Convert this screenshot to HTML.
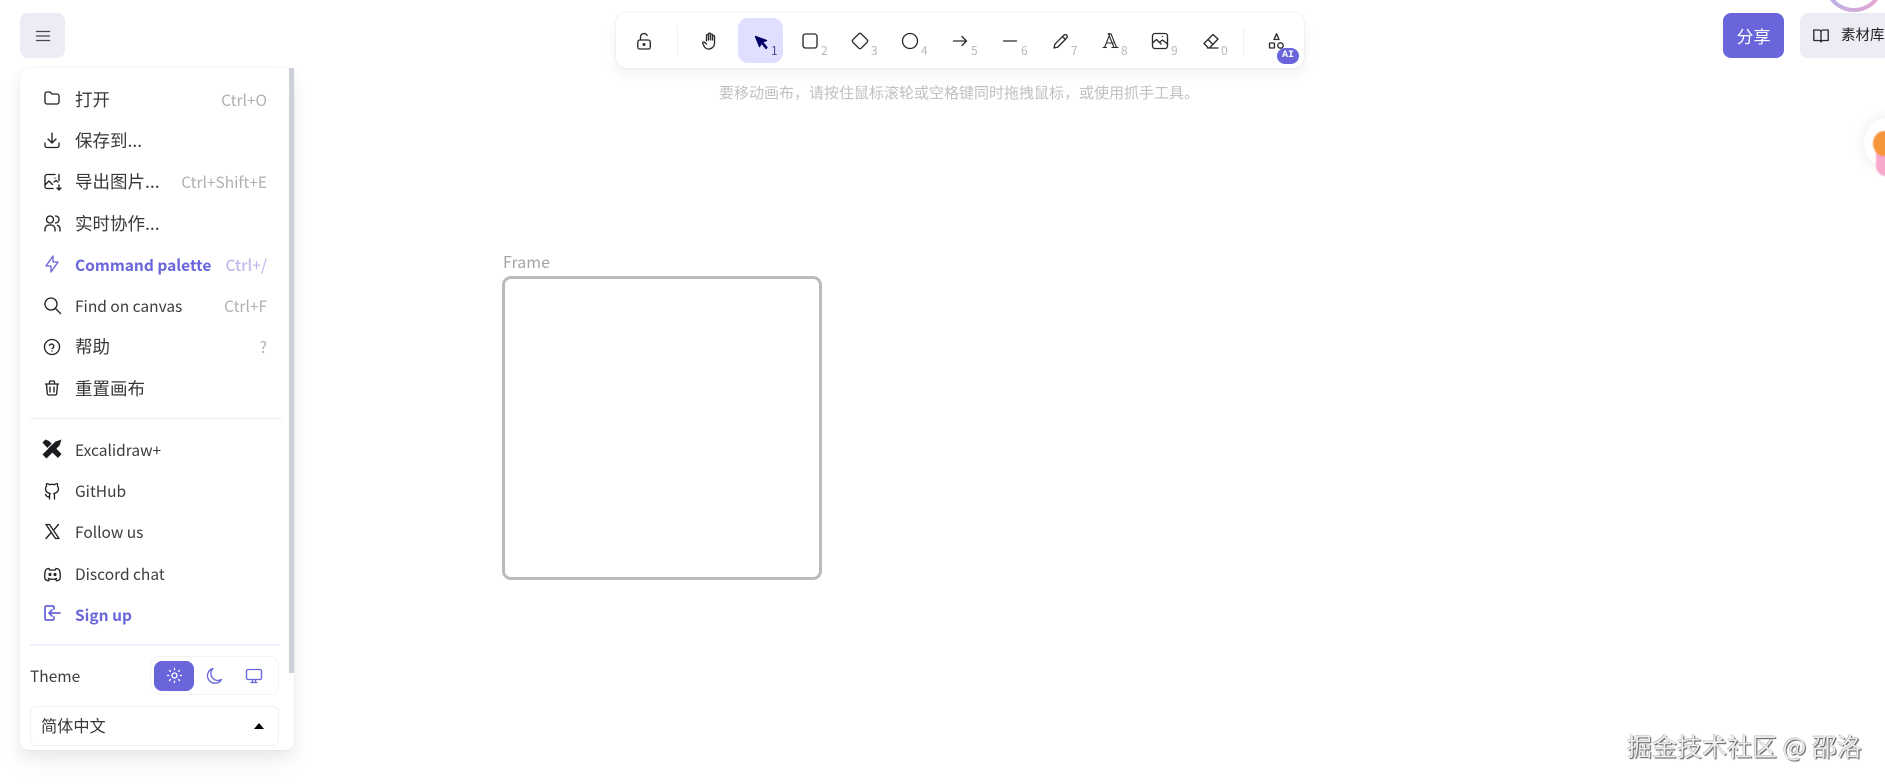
<!DOCTYPE html>
<html lang="zh">
<head>
<meta charset="utf-8">
<style>
html,body{margin:0;padding:0;width:1885px;height:784px;overflow:hidden;background:#fff;}
body{position:relative;font-family:"Noto Sans CJK SC","Liberation Sans",sans-serif;color:#1b1b1f;}
.a{position:absolute;}
svg{position:absolute;fill:none;stroke:currentColor;stroke-width:1.35;stroke-linecap:round;stroke-linejoin:round;overflow:visible;}
.t{position:absolute;left:75px;font-size:15.5px;line-height:24px;height:24px;white-space:nowrap;color:#3d3d42;}
.zh{font-size:17.5px;color:#38383c;}
.k{position:absolute;left:127px;width:140px;text-align:right;font-size:15.5px;line-height:24px;height:24px;color:#b0b0b0;white-space:nowrap;}
.n{position:absolute;font-size:12px;line-height:14px;color:#b8b8b8;}
</style>
</head>
<body>
<!-- hamburger -->
<div class="a" style="left:20px;top:13px;width:45px;height:45px;border-radius:8px;background:#ececf4;"></div>
<svg style="left:36px;top:29px;color:#45454c" width="14" height="14" viewBox="0 0 14 14"><path d="M0.500 2.500h13M0.500 7h13M0.500 11.500h13"/></svg>

<!-- menu panel -->
<div class="a" style="left:20px;top:68px;width:274px;height:682px;background:#fff;border-radius:8px;box-shadow:0 0 1px rgba(0,0,0,.17),0 7px 14px rgba(0,0,0,.06),0 14px 28px rgba(0,0,0,.04);"></div>
<div class="a" style="left:289px;top:68px;width:5px;height:605px;background:#cdd1d8;"></div>

<!-- rows -->
<svg style="left:44px;top:90px;color:#222" width="16" height="16" viewBox="0 0 16 16"><path d="M3 2h3l2 2h5a2 2 0 0 1 2 2v6a2 2 0 0 1-2 2H3a2 2 0 0 1-2-2V4a2 2 0 0 1 2-2z"/></svg>
<div class="t zh" style="top:88px">打开</div><div class="k" style="top:88px">Ctrl+O</div>

<svg style="left:44px;top:132px;color:#222" width="16" height="17" viewBox="0 0 16 17"><path d="M1 11v2.500A2 2 0 0 0 3 15.500h10a2 2 0 0 0 2-2V11M4 7l4 4 4-4M8 1v10"/></svg>
<div class="t zh" style="top:129px">保存到...</div>

<svg style="left:44px;top:173px;color:#222" width="18" height="18" viewBox="0 0 18 18"><path d="M11 1.500H3a2 2 0 0 0-2 2v10a2 2 0 0 0 2 2h6M1 12l4-4 3.500 3.500M10 9l2-1.500 2 1.500M15 1.500v6M15 12v5M13 15l2 2 2-2M11 5h.01"/></svg>
<div class="t zh" style="top:170px">导出图片...</div><div class="k" style="top:170px">Ctrl+Shift+E</div>

<svg style="left:44px;top:215px;color:#222" width="17" height="17" viewBox="0 0 17 17"><circle cx="6" cy="4.500" r="3.500"/><path d="M1 16v-2a4 4 0 0 1 4-4h2a4 4 0 0 1 4 4v2M11.500 1a3.500 3.500 0 0 1 0 7M16 16v-2a4 4 0 0 0-2.500-3.700"/></svg>
<div class="t zh" style="top:212px">实时协作...</div>

<svg style="left:45px;top:255px;color:#6965db" width="14" height="18" viewBox="0 0 14 18"><path d="M8 1v6h5L6 17v-6H1z"/></svg>
<div class="t" style="top:253px;color:#6965db;font-weight:700">Command palette</div><div class="k" style="top:253px;color:#bdbbee;font-weight:500">Ctrl+/</div>

<svg style="left:44px;top:297px;color:#222" width="17" height="17" viewBox="0 0 17 17"><circle cx="7" cy="7" r="6"/><path d="M11.500 11.500l5 5"/></svg>
<div class="t" style="top:294px">Find on canvas</div><div class="k" style="top:294px">Ctrl+F</div>

<svg style="left:44px;top:339px;color:#222" width="16" height="16" viewBox="0 0 16 16"><circle cx="8" cy="8" r="7.500"/><path d="M8 12v.01M8 9.600a2.300 2.300 0 1 0-2.600-3.300"/></svg>
<div class="t zh" style="top:335px">帮助</div><div class="k" style="top:335px">?</div>

<svg style="left:45px;top:380px;color:#222" width="14" height="16" viewBox="0 0 14 16"><path d="M0.500 4h13M5 7v5M9 7v5M1.500 4l.8 9.500a1.500 1.500 0 0 0 1.500 1.500h6.400a1.500 1.500 0 0 0 1.500-1.500l.8-9.500M4.500 4V2a1 1 0 0 1 1-1h3a1 1 0 0 1 1 1v2"/></svg>
<div class="t zh" style="top:377px">重置画布</div>

<div class="a" style="left:30px;top:418px;width:252px;height:1px;background:#ececf2;"></div>

<svg style="left:42px;top:439px;stroke:none;fill:#1b1b1f" width="20" height="20" viewBox="0 0 20 20"><path d="M0.500 3.500L3.500 0.500 7 2 19.500 15l-3.500 4L3.500 7z"/><path d="M0.500 15.500L13.500 2.500 19.500 0.500 17.500 6.500 4.500 19.500z"/><path d="M6 9L10 5" stroke="#fff" stroke-width="1"/></svg>
<div class="t" style="top:438px">Excalidraw+</div>

<svg style="left:44px;top:482px;color:#222" width="16" height="18" viewBox="0 0 16 18"><path d="M5.500 17v-3.500c0-1 .2-1.600.7-2C3.500 11 1.500 9.800 1.500 6.800c0-1 .3-1.800 1-2.500-.2-.8-.1-1.700.2-2.800 1 0 1.900.4 2.800 1.200a8 8 0 0 1 5 0c.9-.8 1.800-1.200 2.800-1.200.3 1.100.4 2 .2 2.800.7.700 1 1.500 1 2.500 0 3-2 4.200-4.700 4.700.5.500.7 1.100.7 2V17M5.500 14.500c-2.200.6-3-.2-4-2"/></svg>
<div class="t" style="top:479px">GitHub</div>

<svg style="left:45px;top:524px;color:#222" width="15" height="15" viewBox="0 0 15 15" stroke-width="1.100"><path d="M1 0.500h3.500L14 14.500h-3.500zM13.500 0.500L8.500 6.300M6.300 8.500L1 14.500"/></svg>
<div class="t" style="top:520px">Follow us</div>

<svg style="left:44px;top:567px;color:#222" width="17" height="15" viewBox="0 0 17 15"><path d="M5 1.500C3.500 1.500 2 2.200 1.500 3.500.7 6 .5 9 1 12c.8 1 2.300 1.700 3.500 1.800l1-2M12 1.500c1.500 0 3 .7 3.500 2 .8 2.500 1 5.500.5 8.500-.8 1-2.300 1.700-3.500 1.800l-1-2M5 1.500l.6 1.500h5.800l.6-1.500M4.500 11.500c2.500 1 5.500 1 8 0"/><circle cx="6" cy="7.500" r=".9"/><circle cx="11" cy="7.500" r=".9"/></svg>
<div class="t" style="top:562px">Discord chat</div>

<svg style="left:44px;top:605px;color:#6965db;stroke-width:1.8" width="17" height="16" viewBox="0 0 17 16"><path d="M10 4V2.500A1.500 1.500 0 0 0 8.500 1h-6A1.500 1.500 0 0 0 1 2.500v11A1.500 1.500 0 0 0 2.500 15h6a1.500 1.500 0 0 0 1.500-1.500V12M16 8H5M8 5L5 8l3 3"/></svg>
<div class="t" style="top:603px;color:#6965db;font-weight:700">Sign up</div>

<div class="a" style="left:30px;top:644px;width:250px;height:2px;background:#f1f0ff;"></div>

<div class="t" style="left:30px;top:664px">Theme</div>
<div class="a" style="left:150px;top:656px;width:127px;height:37px;border:1px solid #f3f3f6;border-radius:10px;"></div>
<div class="a" style="left:154px;top:661px;width:40px;height:30px;background:#6965db;border-radius:8px;"></div>
<svg style="left:167px;top:668px;color:#fff" width="15" height="15" viewBox="0 0 15 15"><circle cx="7.500" cy="7.500" r="2.500"/><path d="M7.500 0.500v1.200M7.500 13.300v1.200M0.500 7.500h1.200M13.300 7.500h1.200M2.500 2.500l.9.900M11.600 11.600l.9.900M2.500 12.500l.9-.9M11.600 3.400l.9-.9"/></svg>
<svg style="left:206px;top:668px;color:#6965db" width="16" height="16" viewBox="0 0 16 16"><path d="M7 0.500a7.500 7.500 0 1 0 8.500 11 7 7 0 0 1-8.500-11z"/></svg>
<svg style="left:246px;top:669px;color:#6965db" width="16" height="14" viewBox="0 0 16 14"><rect x="0.500" y="0.500" width="15" height="10" rx="1.500"/><path d="M5 13.500h6M6.500 10.500v3M9.500 10.500v3"/></svg>

<div class="a" style="left:30px;top:706px;width:247px;height:38px;border:1px solid #f1f1f4;border-radius:6px;"></div>
<div class="t zh" style="left:41px;top:713px;font-size:16.2px">简体中文</div>
<div class="a" style="left:254px;top:723px;width:0;height:0;border-left:5.500px solid transparent;border-right:5.500px solid transparent;border-bottom:6px solid #000;"></div>

<!-- toolbar -->
<div class="a" style="left:616px;top:13px;width:688px;height:55px;background:#fff;border-radius:10px;box-shadow:0 0 1px rgba(0,0,0,.17),0 7px 14px rgba(0,0,0,.05),0 0 4px rgba(0,0,0,.03);"></div>
<svg style="left:637px;top:33px;color:#2a2a2e" width="14" height="17" viewBox="0 0 14 17"><rect x="0.800" y="7" width="12.500" height="9" rx="2"/><path d="M3.500 7V4a3.500 3.500 0 0 1 6.600-1.500"/><circle cx="7" cy="11.500" r=".8" fill="currentColor"/></svg>
<div class="a" style="left:677px;top:26px;width:1px;height:30px;background:#f0f0f6;"></div>
<svg style="left:702px;top:32px;color:#2a2a2e" width="16" height="18" viewBox="0 0 16 18"><path d="M4.500 9V3.500a1 1 0 0 1 2 0M6.500 8V2a1 1 0 0 1 2 0v6M8.500 3a1 1 0 0 1 2 0v5M10.500 4.500a1 1 0 0 1 2 0V11a6 6 0 0 1-6 6c-2 0-3-.8-4-2L.8 11.500c-.6-1 .8-2 1.700-1.200L4.500 12"/></svg>

<div class="a" style="left:738px;top:18px;width:45px;height:45px;background:#e0dfff;border-radius:10px;"></div>
<svg style="left:755px;top:36px;color:#030064;stroke:#030064;fill:#030064" width="14" height="14" viewBox="0 0 14 14"><path d="M0.500 0.500l11 4-4 1.500 4.500 5.500-1 1-4.500-5.500-2 3.500z"/></svg>
<div class="n" style="left:771px;top:44px;color:#4a4790">1</div>

<svg style="left:803px;top:34px;color:#2a2a2e" width="14" height="14" viewBox="0 0 14 14"><rect x="0" y="0" width="14" height="14" rx="2.500"/></svg>
<div class="n" style="left:821px;top:44px">2</div>
<svg style="left:852px;top:33px;color:#2a2a2e" width="16" height="16" viewBox="0 0 16 16"><path d="M6.800 0.800a1.700 1.700 0 0 1 2.400 0l6 6a1.700 1.700 0 0 1 0 2.400l-6 6a1.700 1.700 0 0 1-2.400 0l-6-6a1.700 1.700 0 0 1 0-2.400z"/></svg>
<div class="n" style="left:871px;top:44px">3</div>
<svg style="left:902px;top:33px;color:#2a2a2e" width="16" height="16" viewBox="0 0 16 16"><circle cx="8" cy="8" r="7.500"/></svg>
<div class="n" style="left:921px;top:44px">4</div>
<svg style="left:953px;top:35px;color:#2a2a2e" width="14" height="12" viewBox="0 0 14 12"><path d="M0.500 6h13M9 1.500L13.500 6 9 10.500"/></svg>
<div class="n" style="left:971px;top:44px">5</div>
<svg style="left:1003px;top:40px;color:#2a2a2e" width="14" height="2" viewBox="0 0 14 2" stroke-width="2"><path d="M0.500 1h13"/></svg>
<div class="n" style="left:1021px;top:44px">6</div>
<svg style="left:1053px;top:34px;color:#2a2a2e" width="15" height="15" viewBox="0 0 15 15"><path d="M1 14l.9-3.800L10.800 1.200a2 2 0 0 1 2.900 2.800L4.800 13.100zM9.500 2.600l2.900 2.900"/></svg>
<div class="n" style="left:1071px;top:44px">7</div>
<svg style="left:1103px;top:33px;color:#2a2a2e;stroke-width:1.100" width="15" height="15" viewBox="0 0 15 15"><path d="M1.500 14.500L7 0.800M5 0.800h3l5.500 13.700M5.500 0.800L11 14.500M3.500 10h7M0 14.500h3.500M9 14.500h6"/></svg>
<div class="n" style="left:1121px;top:44px">8</div>
<svg style="left:1152px;top:33px;color:#2a2a2e" width="16" height="16" viewBox="0 0 16 16"><rect x="0.500" y="0.500" width="15" height="15" rx="2.500"/><path d="M0.500 10l4-3.500 4.500 4.500M8 9l2.500-2 5 4M10.500 3.500h.01"/></svg>
<div class="n" style="left:1171px;top:44px">9</div>
<svg style="left:1203px;top:33px;color:#2a2a2e" width="16" height="16" viewBox="0 0 16 16"><path d="M4.500 15H15M5.500 15L1 10.500 10 1.500 15 6l-8.500 9M5 6.500l5 5"/></svg>
<div class="n" style="left:1221px;top:44px">0</div>
<div class="a" style="left:1243px;top:28px;width:1px;height:28px;background:#f0f0f6;"></div>
<svg style="left:1269px;top:33px;color:#2a2a2e" width="15" height="16" viewBox="0 0 15 16"><path d="M7.500 0.800L10 6.500H5z"/><rect x="0.500" y="10" width="5" height="5" rx=".8"/><circle cx="11.500" cy="12.500" r="2.700"/></svg>
<div class="a" style="left:1277px;top:48px;width:22px;height:16px;background:#6965db;border-radius:8px;color:#fff;font-family:'Liberation Mono',monospace;font-weight:700;font-size:10px;line-height:16px;text-align:center;">AI</div>

<!-- hint -->
<div class="a" style="left:559px;top:82px;width:800px;text-align:center;font-size:15px;line-height:22px;color:#c0c0c0;white-space:nowrap;">要移动画布，请按住鼠标滚轮或空格键同时拖拽鼠标，或使用抓手工具。</div>

<!-- frame -->
<div class="a" style="left:503px;top:251px;font-size:16px;line-height:20px;color:#a5a5a5;">Frame</div>
<div class="a" style="left:502px;top:276px;width:314px;height:298px;border:3px solid #bbb;border-radius:9px;"></div>

<!-- top right -->
<div class="a" style="left:1824px;top:-48px;width:52px;height:52px;border-radius:50%;border:4px solid transparent;background:linear-gradient(#fff,#fff) padding-box,linear-gradient(90deg,#b9b2e8,#eaa6cf) border-box;"></div>
<div class="a" style="left:1723px;top:13px;width:61px;height:45px;background:#6965db;border-radius:8px;color:#fff;font-size:17px;line-height:45px;text-align:center;">分享</div>
<div class="a" style="left:1800px;top:13px;width:100px;height:45px;background:#ececf4;border-radius:8px;"></div>
<svg style="left:1813px;top:29px;color:#2a2a2e" width="16" height="14" viewBox="0 0 16 14"><path d="M0.800 1h5a2.200 2.200 0 0 1 2.200 2.200V13a2 2 0 0 0-2-1.500H0.800zM15.200 1h-5A2.200 2.200 0 0 0 8 3.200V13a2 2 0 0 1 2-1.500h5.200z"/></svg>
<div class="a" style="left:1841px;top:23px;font-size:14.500px;line-height:24px;color:#222;white-space:nowrap;">素材库</div>

<!-- side floating -->
<div class="a" style="left:1864px;top:118px;width:50px;height:50px;border-radius:50%;background:#fff;box-shadow:0 0 16px rgba(0,0,0,.09);"></div>
<div class="a" style="left:1876px;top:138px;width:20px;height:38px;border-radius:10px;background:#f8a8cc;filter:blur(.7px);"></div>
<div class="a" style="left:1873px;top:131px;width:22px;height:25px;border-radius:50%;background:#f6953a;filter:blur(.7px);"></div>

<!-- watermark -->
<div class="a" style="left:1627px;top:730px;font-size:25px;line-height:32px;color:#eee;text-shadow:1px 1px 1px #555,-0.500px -0.500px 0 #aaa;white-space:nowrap;">掘金技术社区 @ 邵洛</div>
</body>
</html>
